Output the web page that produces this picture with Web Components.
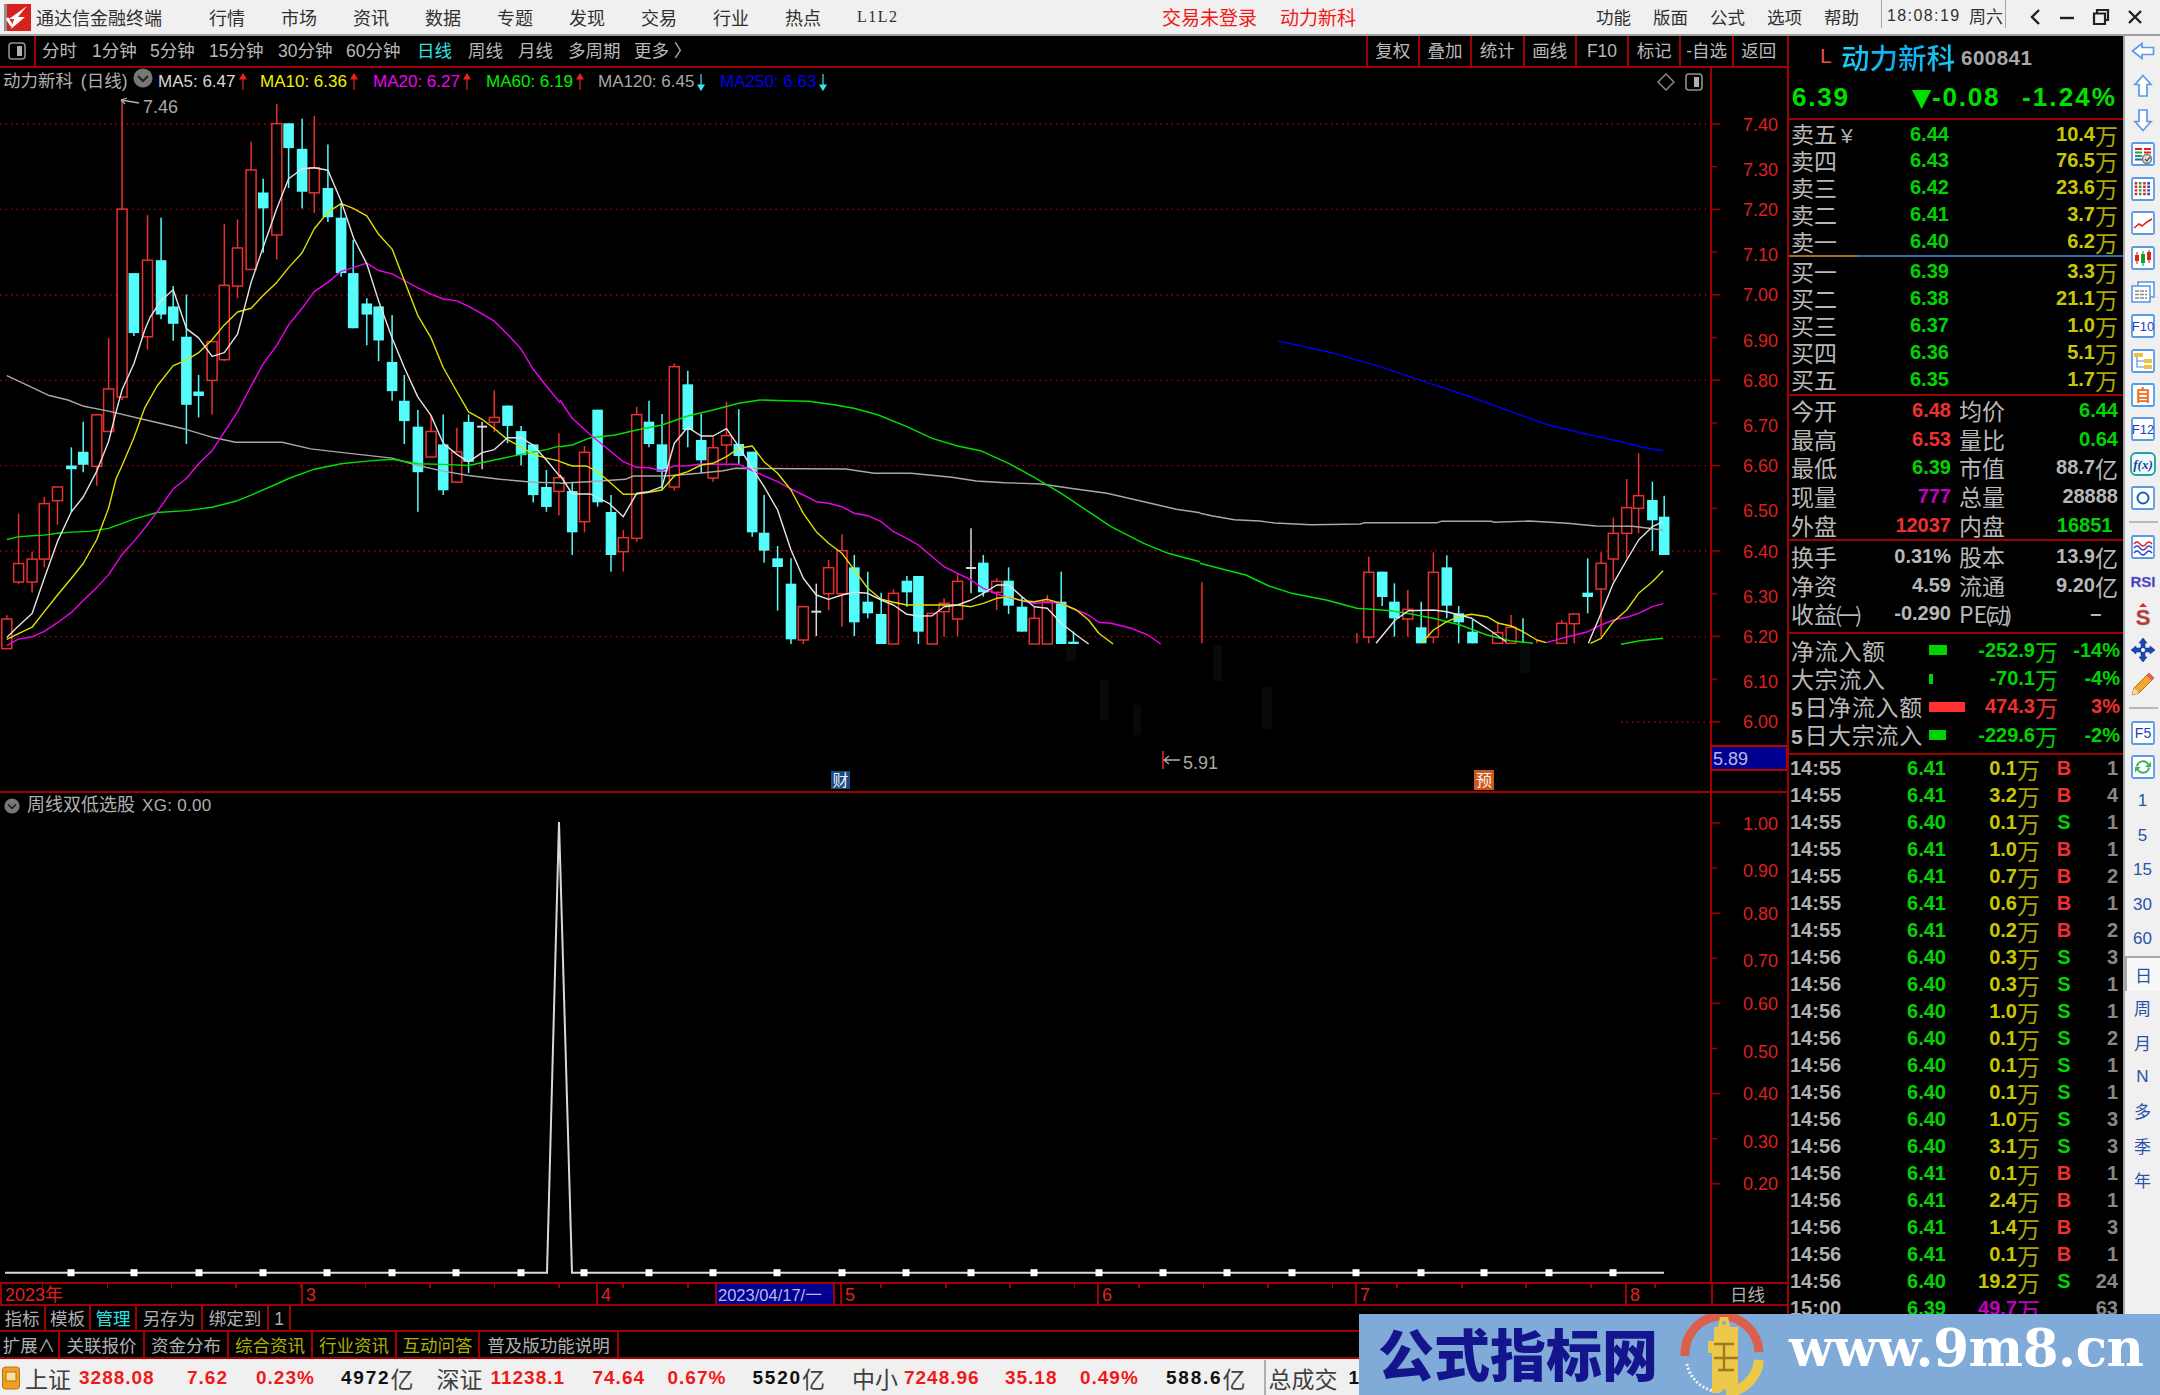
<!DOCTYPE html>
<html lang="zh-CN">
<head>
<meta charset="utf-8">
<title>通达信金融终端</title>
<style>
  html, body { margin: 0; padding: 0; background: #000; }
  body { width: 2160px; height: 1395px; overflow: hidden; position: relative;
    font-family: "Liberation Sans", "Noto Sans CJK SC", sans-serif; }
  #app { display: grid; grid-template-rows: 36px 1323px 36px; width: 2160px; height: 1395px; }
  #mid { display: grid; grid-template-columns: 1787px 336px 37px; height: 1323px; overflow: hidden; }
  #left { display: flex; flex-direction: column; height: 1323px; }
</style>
</head>
<body>
<div id="app">
  <tdx-titlebar></tdx-titlebar>
  <div id="mid">
    <div id="left">
      <tdx-toolbar></tdx-toolbar>
      <tdx-kline></tdx-kline>
      <tdx-xg></tdx-xg>
      <tdx-dates></tdx-dates>
      <tdx-tabs h="24" shift="1" items="指标:46,模板:45,管理:46:#30e0e0,另存为:66,绑定到:66,1:22"></tdx-tabs>
      <tdx-tabs h="25" shift="2" items="扩展∧:60,关联报价:85,资金分布:84,综合资讯:84:#b0b000,行业资讯:84:#b0b000,互动问答:83:#b0b000,普及版功能说明:139"></tdx-tabs>
    </div>
    <tdx-quote></tdx-quote>
    <tdx-side></tdx-side>
  </div>
  <tdx-status></tdx-status>
</div>
<tdx-banner>
  <span slot="name">公式指标网</span>
  <span slot="url">www.9m8.cn</span>
</tdx-banner>

<script>
const RED = "#a00000";
const CJK = '"Noto Sans CJK SC", sans-serif';
const NUM = '"Liberation Sans", "Noto Sans CJK SC", sans-serif';

// zoom crops -> page coords (that's how the points were read off)
const Z8 = { x: v => v / 2.8, y: v => 90 + v / 2.703 };
const Z9 = { x: v => 560 + v / 2.45, y: v => 340 + v / 3 };
const Z10 = { x: v => 1200 + v / 2.613, y: v => 320 + v / 3 };

// zx, wick top, body top, body bottom, wick bottom, type
const C8 = [[19,1420,1430,1510,1510,"r"],[52,1145,1280,1330,1335,"r"],[90,1248,1268,1330,1358,"r"],[124,1100,1118,1268,1290,"r"],[161,1073,1073,1110,1175,"r"],[200,966,1015,1025,1140,"c"],[233,897,978,1013,1033,"c"],[271,878,878,1017,1070,"r"],[304,670,808,923,923,"r"],[342,25,322,830,838,"r"],[375,495,495,657,665,"c"],[413,338,460,667,702,"r"],[451,345,460,607,620,"c"],[485,530,585,632,678,"c"],[522,553,667,851,957,"c"],[556,770,815,827,885,"c"],[594,678,680,785,877,"r"],[628,362,528,729,733,"r"],[665,350,427,530,563,"r"],[703,140,216,485,485,"r"],[737,240,277,320,440,"c"],[775,37,91,392,458,"r"],[808,90,90,157,265,"c"],[846,78,159,275,320,"c"],[880,70,210,278,332,"r"],[918,147,265,344,357,"c"],[955,305,345,495,505,"c"],[989,405,495,644,644,"c"],[1027,563,577,607,690,"c"],[1060,585,585,677,733,"c"],[1098,608,735,814,840,"c"],[1132,770,840,895,957,"c"],[1170,865,910,1033,1140,"c"],[1207,880,923,992,992,"r"],[1241,877,958,1082,1095,"c"],[1279,913,978,1060,1060,"r"],[1312,877,897,1005,1035,"c"],[1350,897,910,910,1025,"w"],[1384,812,885,898,925,"r"],[1421,853,853,908,955,"c"],[1459,908,922,987,1015,"c"],[1493,958,958,1095,1115,"c"],[1530,1027,1073,1127,1140,"c"],[1565,928,1048,1085,1150,"r"]];
const C9 = [[30,425,453,577,645,"c"],[60,318,337,545,577,"r"],[92,209,209,487,500,"c"],[125,465,516,645,695,"c"],[155,570,593,635,695,"r"],[188,200,224,595,605,"r"],[218,182,245,312,322,"c"],[250,222,313,395,450,"c"],[280,70,80,441,452,"r"],[313,92,133,270,322,"c"],[346,222,300,361,400,"c"],[375,290,323,414,425,"r"],[408,185,287,315,370,"r"],[438,208,312,348,375,"c"],[471,335,335,577,590,"c"],[500,465,578,632,668,"c"],[533,618,655,681,812,"c"],[566,655,731,898,912,"c"],[596,800,800,900,912,"r"],[628,731,815,815,888,"w"],[658,660,683,761,810,"r"],[691,583,632,761,860,"r"],[721,645,682,847,888,"c"],[754,695,785,820,835,"c"],[787,758,822,912,912,"c"],[817,748,760,912,912,"r"],[850,708,722,757,800,"c"],[878,708,708,875,912,"c"],[912,820,820,912,912,"r"],[941,775,790,815,890,"r"],[974,700,724,837,888,"r"],[1007,565,684,684,760,"w"],[1037,645,668,757,770,"c"],[1070,715,724,757,810,"r"],[1099,682,722,797,822,"c"],[1132,770,800,875,875,"c"],[1162,800,835,912,912,"r"],[1194,765,785,912,912,"r"],[1228,695,785,912,912,"c"],[1258,875,905,912,912,"c"]];
const C10 = [[5,787,970,970,970,"w-r"],[410,940,970,970,970,"w-r"],[441,710,757,951,970,"r"],[476,755,755,831,858,"c"],[508,790,845,895,950,"c"],[543,810,868,897,950,"r"],[578,845,922,970,970,"c"],[610,697,757,951,970,"r"],[645,706,742,857,895,"c"],[676,858,880,907,970,"c"],[712,900,935,970,970,"c"],[778,905,938,970,970,"r"],[813,885,922,970,970,"r"],[844,895,970,970,970,"w-c"],[880,960,970,970,970,"w-r"],[945,900,910,970,970,"r"],[978,880,882,911,970,"r"],[1013,715,818,831,880,"c"],[1048,697,730,807,950,"r"],[1080,593,640,717,782,"r"],[1115,477,563,640,715,"r"],[1146,400,527,565,640,"r"],[1182,485,540,601,693,"c"],[1213,527,590,705,705,"c"]];

const LINES = [
  ["#a8a8a8", Z8, [19,772,70,795,135,825,190,838,235,855,304,868,400,890,520,917,600,940,660,952,790,952,870,970,960,980,1098,995,1170,1015,1241,1030,1312,1042,1400,1052,1493,1060,1568,1062]],
  ["#a8a8a8", Z9, [0,430,70,425,160,418,180,408,260,408,340,400,400,392,430,385,700,387,770,400,860,400,960,412,1020,423,1090,428,1180,432,1250,445,1340,460,1420,482,1510,508,1568,518]],
  ["#a8a8a8", Z10, [0,580,30,587,90,599,155,603,195,609,290,614,420,612,430,608,620,608,630,604,760,604,770,607,860,603,960,610,1035,618,1130,619,1210,630]],
  ["#0000f0", Z10, [205,63,350,100,470,140,600,190,700,228,790,265,910,315,1000,340,1100,365,1150,380,1210,392]],
  ["#00e000", Z8, [19,1215,50,1208,90,1205,124,1203,161,1198,200,1195,250,1193,304,1185,375,1160,440,1142,522,1137,594,1128,665,1110,703,1095,775,1065,808,1050,880,1025,955,1010,1027,1003,1098,998,1170,1010,1241,1012,1312,1015,1384,1000,1459,985,1530,972,1568,962]],
  ["#00e000", Z9, [0,320,30,315,75,293,135,285,188,270,250,255,313,228,375,210,438,190,490,180,550,182,610,184,675,195,720,205,780,225,850,260,912,295,974,318,1030,332,1099,370,1162,412,1228,460,1295,515,1350,560,1430,610,1490,640,1568,665]],
  ["#00e000", Z10, [0,730,60,748,120,765,180,798,240,820,330,840,410,865,500,872,540,880,610,895,680,915,750,945,810,962,870,970]],
  ["#00e000", Z10, [1100,973,1150,962,1210,955]],
  ["#f000f0", Z8, [19,1502,50,1485,90,1478,124,1463,161,1440,200,1412,233,1380,271,1345,304,1310,342,1255,375,1220,405,1185,440,1140,485,1078,522,1050,556,1010,594,975,628,925,665,870,703,800,737,740,775,690,808,635,846,590,880,545,918,520,955,490,989,480,1027,468,1060,488,1098,497,1132,515,1170,535,1207,552,1241,565,1279,570,1312,585,1350,605,1384,625,1421,660,1459,700,1493,755,1530,800,1568,845]],
  ["#f000f0", Z9, [0,180,30,235,75,285,120,330,155,365,188,382,218,383,250,392,280,378,313,377,346,372,375,373,438,373,471,392,533,425,566,447,596,465,628,485,658,490,691,500,721,520,754,527,787,545,817,575,850,595,878,615,912,650,941,680,974,700,1007,720,1037,745,1070,762,1099,772,1132,783,1162,790,1194,787,1228,790,1265,810,1295,825,1320,847,1350,850,1400,865,1440,885,1472,912]],
  ["#f000f0", Z10, [905,968,945,955,980,945,1013,935,1048,915,1080,900,1115,892,1146,880,1182,860,1210,851]],
  ["#e0e000", Z8, [19,1485,50,1470,90,1452,124,1410,161,1365,200,1320,233,1280,271,1215,304,1130,325,1050,342,1015,375,940,405,860,440,800,485,745,522,730,556,710,594,675,628,635,665,600,703,590,737,555,775,520,808,480,846,440,880,375,918,330,955,307,989,320,1027,340,1060,390,1098,430,1132,515,1170,610,1207,670,1241,750,1279,815,1312,870,1350,890,1384,915,1421,945,1459,965,1493,985,1530,995,1568,1003]],
  ["#e0e000", Z9, [0,365,30,378,65,378,92,395,125,430,155,463,188,462,218,457,250,450,280,408,313,395,346,375,375,370,408,350,438,325,471,318,500,365,533,400,566,450,596,520,628,575,658,610,691,640,721,690,754,745,787,778,817,787,850,795,878,795,912,795,941,795,974,795,1007,800,1037,790,1070,775,1099,770,1132,782,1162,785,1194,778,1228,790,1265,810,1295,840,1320,880,1355,912]],
  ["#e0e000", Z10, [580,968,610,930,645,905,680,888,710,883,750,890,780,910,813,918,844,935,880,960,905,968]],
  ["#e0e000", Z10, [1020,970,1048,955,1080,905,1115,870,1146,820,1182,785,1210,752]],
  ["#e4e4e4", Z8, [19,1480,50,1450,90,1415,124,1320,161,1220,200,1140,233,1100,271,1030,304,950,325,870,342,810,375,740,405,650,420,615,450,570,485,540,522,645,556,670,594,720,628,710,665,660,703,520,737,425,775,320,808,240,846,213,880,210,918,217,955,300,990,400,1027,470,1060,570,1098,670,1132,750,1170,830,1207,880,1241,955,1279,985,1312,1005,1350,980,1384,972,1421,940,1459,940,1493,960,1530,1000,1568,1045]],
  ["#e4e4e4", Z9, [0,405,30,462,75,462,120,490,155,530,188,460,218,455,250,440,280,310,313,262,346,288,375,288,408,266,438,320,471,385,500,440,533,510,566,630,596,715,628,765,658,778,691,765,721,757,754,760,787,780,817,795,850,823,878,828,912,827,941,800,974,795,1007,780,1037,760,1070,735,1099,735,1132,770,1162,800,1194,805,1228,850,1265,885,1295,912]],
  ["#e4e4e4", Z10, [460,970,510,900,545,872,610,870,645,875,710,895,750,925,800,965]],
  ["#e4e4e4", Z10, [1015,970,1048,880,1080,790,1115,720,1146,660,1182,620,1210,605]]
];

function poly(color, z, pts) {
  let out = [];
  for (let i = 0; i < pts.length; i += 2) out.push(z.x(pts[i]).toFixed(1) + "," + z.y(pts[i + 1]).toFixed(1));
  return `<polyline points="${out.join(" ")}" fill="none" stroke="${color}" stroke-width="1.4" stroke-linejoin="round"/>`;
}

function candle(z, d) {
  const [zx, wt, bt, bb, wb, t] = d;
  const x = z.x(zx).toFixed(1), yw = z.y(wt), yt = z.y(bt), yb = z.y(bb), yl = z.y(wb);
  const rd = "#e83030", cy = "#54fcfc";
  if (t === "w-r") return `<line x1="${x}" x2="${x}" y1="${yw}" y2="${yl}" stroke="${rd}" stroke-width="1.5"/>`;
  if (t === "w-c") return `<line x1="${x}" x2="${x}" y1="${yw}" y2="${yl}" stroke="${cy}" stroke-width="1.5"/>`;
  if (t === "w") return `<line x1="${x}" x2="${x}" y1="${yw}" y2="${yl}" stroke="#d8d8d8" stroke-width="1.5"/><line x1="${x - 5}" x2="${+x + 5}" y1="${yt}" y2="${yt}" stroke="#d8d8d8" stroke-width="2"/>`;
  if (t === "r") return `<line x1="${x}" x2="${x}" y1="${yw}" y2="${yl}" stroke="${rd}" stroke-width="1.5"/><rect x="${x - 5}" y="${yt}" width="10" height="${yb - yt}" fill="#000" stroke="${rd}" stroke-width="1.5"/>`;
  return `<line x1="${x}" x2="${x}" y1="${yw}" y2="${yl}" stroke="${cy}" stroke-width="1.5"/><rect x="${x - 5.3}" y="${yt}" width="10.6" height="${yb - yt}" fill="${cy}"/>`;
}

function axisLabel(y, txt, major) {
  const lbl = major ? y : y + 2.5;
  return `<line x1="1711" x2="${major ? 1720 : 1717}" y1="${y}" y2="${y}" stroke="${RED}" stroke-width="1.5"/>
    <text x="1778" y="${lbl + 6.5}" text-anchor="end" fill="#dc2020" font-size="18">${txt}</text>`;
}

class TdxTitlebar extends HTMLElement {
  connectedCallback() {
    this.attachShadow({ mode: "open" });
    const menu = ["行情","市场","资讯","数据","专题","发现","交易","行业","热点"];
    this.shadowRoot.innerHTML = `<style>
      :host { display: flex; height: 36px; box-sizing: border-box; background: #f0f0f0; border-bottom: 2px solid #a0a0a0;
        color: #303030; font: 18px/34px ${CJK}; white-space: nowrap; }
      .l { flex: 0 0 1162px; display: flex; }
      .logo { flex: 0 0 36px; display: flex; align-items: center; padding-left: 4px; box-sizing: border-box; }
      .app { flex: 0 0 173px; }
      .m { flex: 0 0 72px; }
      .lv { font-family: "Liberation Serif", serif; font-size: 16px; letter-spacing: 1.5px; }
      .hot { flex: 0 0 434px; display: flex; color: #f01818; font-size: 19px; }
      .hot span:first-child { flex: 0 0 118px; }
      .r { flex: 0 0 282px; display: flex; }
      .r span { flex: 0 0 57px; font-size: 17.5px; }
      .clock { flex: 0 0 125px; display: flex; border-left: 1px solid #a8a8a8; border-right: 1px solid #a8a8a8; height: 28px; box-sizing: border-box; font: 16px/32px ${NUM}; }
      .clock b { font-weight: normal; flex: 0 0 87px; padding-left: 5px; letter-spacing: 1.4px; box-sizing: border-box; }
      .clock i { font-style: normal; font-family: ${CJK}; font-size: 17px; }
      .win { display: flex; align-items: center; padding-left: 22px; gap: 17px; }
    </style>
    <div class="l">
      <div class="logo"><svg width="27" height="27" viewBox="0 0 27 27"><rect width="27" height="27" fill="#d8201c"/><rect x="0" y="0" width="3" height="27" fill="#909090"/><path d="M23 2 L14 13 L21 13 L7 25 L10 15 L5 15 Z" fill="#fff"/><path d="M3 14 L8 22" stroke="#fff" stroke-width="3"/></svg></div>
      <div class="app">通达信金融终端</div>
      ${menu.map(m => `<div class="m">${m}</div>`).join("")}
      <div class="m lv">L1L2</div>
    </div>
    <div class="hot"><span>交易未登录</span><span>动力新科</span></div>
    <div class="r"><span>功能</span><span>版面</span><span>公式</span><span>选项</span><span>帮助</span></div>
    <div class="clock"><b>18:08:19</b><i>周六</i></div>
    <div class="win">
      <svg width="14" height="18" viewBox="0 0 14 18"><path d="M11 2 L4 9 L11 16" fill="none" stroke="#202020" stroke-width="2.4"/></svg>
      <svg width="16" height="18" viewBox="0 0 16 18"><path d="M1 10 H15" stroke="#202020" stroke-width="2.4"/></svg>
      <svg width="18" height="18" viewBox="0 0 18 18"><path d="M5 5 V2 H16 V12 H13 M2 5.5 H13 V16 H2 Z" fill="none" stroke="#202020" stroke-width="2.2"/></svg>
      <svg width="16" height="18" viewBox="0 0 16 18"><path d="M2 3 L14 15 M14 3 L2 15" stroke="#202020" stroke-width="2.4"/></svg>
    </div>`;
  }
}

class TdxToolbar extends HTMLElement {
  connectedCallback() {
    this.attachShadow({ mode: "open" });
    const left = [["分时",50],["1分钟",58],["5分钟",59],["15分钟",69],["30分钟",68],["60分钟",71],["日线",51,"#30e0e0"],["周线",50],["月线",50],["多周期",66],["更多 〉",90]];
    const right = ["复权","叠加","统计","画线","F10","标记","-自选","返回"];
    this.shadowRoot.innerHTML = `<style>
      :host { display: flex; height: 32px; box-sizing: border-box; background: #000; border-bottom: 2px solid ${RED};
        color: #b8b8b8; font: 17.5px/30px ${NUM}; white-space: nowrap; }
      .ico { flex: 0 0 36px; box-sizing: border-box; border-right: 2px solid ${RED}; display: flex; align-items: center; justify-content: center; }
      .gap { flex: 0 0 6px; }
      .sp { flex: 1; }
      .c { flex: 0 0 52.3px; box-sizing: border-box; border-left: 2px solid ${RED}; text-align: center; }
      .end { flex: 0 0 3px; }
    </style>
    <div class="ico"><svg width="18" height="18" viewBox="0 0 18 18"><rect x="1" y="1" width="16" height="16" rx="3" fill="none" stroke="#909090" stroke-width="1.6"/><rect x="9" y="4" width="5" height="10" fill="#b0b0b0"/></svg></div>
    <div class="gap"></div>
    ${left.map(l => `<div style="flex:0 0 ${l[1]}px;${l[2] ? "color:" + l[2] : ""}">${l[0]}</div>`).join("")}
    <div class="sp"></div>
    ${right.map(r => `<div class="c">${r}</div>`).join("")}
    <div class="end"></div>`;
  }
}

class TdxKline extends HTMLElement {
  connectedCallback() {
    this.attachShadow({ mode: "open" });
    const arrUp = `<svg width="8" height="18" viewBox="0 0 8 18"><path d="M4 17 V2 M1 6 L4 1 L7 6 Z" stroke="#f02020" fill="#f02020" stroke-width="1.2"/></svg>`;
    const arrDn = `<svg width="8" height="18" viewBox="0 0 8 18"><path d="M4 1 V16 M1 12 L4 17 L7 12 Z" stroke="#30e8f0" fill="#30e8f0" stroke-width="1.2"/></svg>`;
    const ma = [["MA5: 6.47","#d8d8d8",102,arrUp],["MA10: 6.36","#f0f000",113,arrUp],["MA20: 6.27","#f000f0",113,arrUp],["MA60: 6.19","#00f000",112,arrUp],["MA120: 6.45","#a8a8a8",122,arrDn],["MA250: 6.63","#0000f0",120,arrDn]];
    let g = "";
    [124, 209.4, 295, 380.3, 465.7, 551, 636.7].forEach(y => {
      g += `<line x1="0" x2="1711" y1="${y}" y2="${y}" stroke="#b00000" stroke-width="1.3" stroke-dasharray="1.5 4"/>`;
    });
    g += `<line x1="1621" x2="1711" y1="722" y2="722" stroke="#b00000" stroke-width="1.3" stroke-dasharray="1.5 4"/>`;
    // barely visible leftovers under the wiped band
    [[1066,647,10,14],[1100,680,9,40],[1133,705,8,30],[1213,645,9,36],[1262,687,10,42],[1520,645,10,28]].forEach(r => {
      g += `<rect x="${r[0]}" y="${r[1]}" width="${r[2]}" height="${r[3]}" fill="#060b09"/>`;
    });
    C8.forEach(d => g += candle(Z8, d));
    C9.forEach(d => g += candle(Z9, d));
    C10.forEach(d => g += candle(Z10, d));
    LINES.forEach(l => g += poly(l[0], l[1], l[2]));
    // high / low marks
    g += `<path d="M121 100 L139 103 M121 100 L127 98 M121 100 L125 104" stroke="#b0b0b0" stroke-width="1.3" fill="none"/>
      <text x="143" y="113" fill="#a8a8a8" font-size="18">7.46</text>
      <line x1="1163" x2="1163" y1="751" y2="769" stroke="#e83030" stroke-width="1.5"/>
      <path d="M1164 760 H1180 M1164 760 L1169 756 M1164 760 L1169 764" stroke="#b0b0b0" stroke-width="1.3" fill="none"/>
      <text x="1183" y="769" fill="#a8a8a8" font-size="18">5.91</text>
      <rect x="831" y="771" width="19" height="18" fill="#1a4a80"/>
      <text x="840.5" y="786" text-anchor="middle" fill="#e8f0ff" font-size="16" style="font-family:${CJK}">财</text>
      <rect x="1474" y="770" width="20" height="20" fill="#c85a20"/>
      <text x="1484" y="786" text-anchor="middle" fill="#fff0e0" font-size="16" style="font-family:${CJK}">预</text>`;
    // price axis
    g += `<line x1="1711" x2="1711" y1="95" y2="791" stroke="${RED}" stroke-width="2"/>`;
    ["7.40","7.30","7.20","7.10","7.00","6.90","6.80","6.70","6.60","6.50","6.40","6.30","6.20","6.10","6.00"].forEach((t, i) => {
      g += axisLabel(124 + i * 42.7, t, i % 2 === 0);
    });
    g += `<rect x="1711" y="746" width="76" height="24" fill="#000090" stroke="#c00000" stroke-width="2"/>
      <text x="1713" y="765" fill="#b8b8e8" font-size="18">5.89</text>`;
    this.shadowRoot.innerHTML = `<style>
      :host { display: block; height: 725px; box-sizing: border-box; background: #000; border-bottom: 2px solid ${RED}; }
      .leg { height: 27px; width: 1712px; box-sizing: border-box; border-right: 2px solid ${RED}; display: flex; align-items: center;
        padding-left: 3px; font: 17px/27px ${NUM}; white-space: nowrap; }
      .name { flex: 0 0 130px; color: #b0b0b0; font-size: 17.5px; word-spacing: 3px; }
      .dot { flex: 0 0 25px; }
      .ma { display: flex; align-items: center; gap: 3px; }
      .tr { margin-left: auto; padding-right: 7px; display: flex; gap: 10px; align-items: center; }
      svg.ch { display: block; font-family: ${NUM}; }
    </style>
    <div class="leg">
      <div class="name">动力新科 (日线)</div>
      <div class="dot"><svg width="20" height="20" viewBox="0 0 20 20"><circle cx="10" cy="10" r="9.5" fill="#777"/><path d="M5 8 L10 13 L15 8" fill="none" stroke="#222" stroke-width="2"/></svg></div>
      ${ma.map(m => `<div class="ma" style="flex:0 0 ${m[2]}px;color:${m[1]}"><span>${m[0]}</span>${m[3]}</div>`).join("")}
      <div class="tr">
        <svg width="18" height="18" viewBox="0 0 18 18"><path d="M9 1 L17 9 L9 17 L1 9 Z" fill="none" stroke="#909090" stroke-width="1.4"/></svg>
        <svg width="18" height="18" viewBox="0 0 18 18"><rect x="1" y="1" width="16" height="16" rx="3" fill="none" stroke="#909090" stroke-width="1.6"/><rect x="9" y="4" width="5" height="10" fill="#b0b0b0"/></svg>
      </div>
    </div>
    <svg class="ch" width="1787" height="696" viewBox="0 95 1787 696">${g}</svg>`;
  }
}

class TdxXg extends HTMLElement {
  connectedCallback() {
    this.attachShadow({ mode: "open" });
    const sq = [71,134,199,263,327,392,456,521,584,649,713,777,842,906,971,1034,1099,1163,1227,1292,1356,1421,1484,1549,1613];
    const base = 1272.7;
    let g = `<polyline points="5,${base} 547,${base} 559,822 572,${base} 1664,${base}" fill="none" stroke="#d8d8d8" stroke-width="2"/>`;
    sq.forEach(x => g += `<rect x="${x - 3.5}" y="${base - 3.5}" width="7" height="7" fill="#fff"/>`);
    g += `<line x1="1711" x2="1711" y1="815" y2="1282" stroke="${RED}" stroke-width="2"/>`;
    ["1.00","0.90","0.80","0.70","0.60","0.50","0.40","0.30","0.20"].forEach((t, i) => {
      g += axisLabel(823 + i * 45.1, t, i % 2 === 0);
    });
    this.shadowRoot.innerHTML = `<style>
      :host { display: block; height: 491px; box-sizing: border-box; background: #000; border-bottom: 2px solid ${RED}; }
      .leg { height: 22px; width: 1712px; box-sizing: border-box; border-right: 2px solid ${RED}; display: flex; align-items: center; padding: 3px 0 0 4px;
        color: #b0b0b0; font: 17px/19px ${NUM}; letter-spacing: .3px; white-space: nowrap; }
      .leg svg { margin-right: 7px; }
      .leg span { margin-right: 7px; font-size: 18px; letter-spacing: 0; }
      svg.ch { display: block; font-family: ${NUM}; }
    </style>
    <div class="leg"><svg width="16" height="16" viewBox="0 0 20 20"><circle cx="10" cy="10" r="9.5" fill="#777"/><path d="M5 8 L10 13 L15 8" fill="none" stroke="#222" stroke-width="2"/></svg><span>周线双低选股</span>XG: 0.00</div>
    <svg class="ch" width="1787" height="467" viewBox="0 815 1787 467">${g}</svg>`;
  }
}

class TdxDates extends HTMLElement {
  connectedCallback() {
    this.attachShadow({ mode: "open" });
    const cells = [["2023年",301],["3",295],["4",119],["2023/04/17/一",118,"d"],["",7],["5",257],["6",258],["7",270],["8",86],["日线",76,"e"]];
    this.shadowRoot.innerHTML = `<style>
      :host { display: flex; height: 22px; box-sizing: border-box; border-bottom: 2px solid ${RED}; color: #e02020;
        background: #000 repeating-linear-gradient(90deg, transparent 0 42px, ${RED} 42px 43.5px, transparent 43.5px 64.5px) 0 0 / 1711px 4px no-repeat;
        font: 18px/22px ${NUM}; white-space: nowrap; }
      div { box-sizing: border-box; border-left: 2px solid ${RED}; padding-left: 3px; height: 20px; }
      div:first-child { border-left: 0; padding-left: 7px; }
      .d { background: #000090; color: #b8b8e8; font-size: 16.5px; padding-left: 1px; border-left: 2px solid ${RED}; }
      .e { color: #b0b0b0; font-size: 17.5px; padding-left: 17px; }
    </style>${cells.map(c => `<div class="${c[2] || ""}" style="flex:0 0 ${c[1]}px">${c[0]}</div>`).join("")}`;
  }
}

class TdxTabs extends HTMLElement {
  connectedCallback() {
    this.attachShadow({ mode: "open" });
    const items = this.getAttribute("items").split(",").map(s => s.split(":"));
    const h = +this.getAttribute("h");
    const shift = +this.getAttribute("shift") || 0;
    this.shadowRoot.innerHTML = `<style>
      :host { display: flex; height: ${h + 2}px; box-sizing: border-box; background: #000; border-bottom: 2px solid ${RED}; color: #b0b0b0;
        font: 17.5px/${h}px ${NUM}; white-space: nowrap; }
      div { box-sizing: border-box; border-right: 2px solid ${RED}; text-align: center; height: ${h}px; padding-top: ${shift}px; }
      .sp { flex: 1; border-right: 0; }
    </style>${items.map(i => `<div style="flex:0 0 ${i[1]}px;${i[2] ? "color:" + i[2] : ""}">${i[0]}</div>`).join("")}<div class="sp"></div>`;
  }
}

class TdxQuote extends HTMLElement {
  connectedCallback() {
    this.attachShadow({ mode: "open" });
    const G = "#00d400", R = "#f03030", Y = "#c8c800", W = "#b8b8b8", M = "#c000c0";
    const wan = (v, c) => `<span class="n" style="color:${c || Y}">${v}</span><span class="u" style="color:${(c && c !== Y) ? c : "#b0a800"}">万</span>`;
    const yi = v => `<span class="n" style="color:${W}">${v}</span><span class="u" style="color:${W}">亿</span>`;
    const sell = [["卖五","6.44","10.4"],["卖四","6.43","76.5"],["卖三","6.42","23.6"],["卖二","6.41","3.7"],["卖一","6.40","6.2"]];
    const buy = [["买一","6.39","3.3"],["买二","6.38","21.1"],["买三","6.37","1.0"],["买四","6.36","5.1"],["买五","6.35","1.7"]];
    const oRow = r => `<div class="o"><div class="lb">${r[0]}${r[0] === "卖五" ? `<i>¥</i>` : ""}</div><div class="n" style="color:${G}">${r[1]}</div><div class="ri">${wan(r[2])}</div></div>`;
    const num = (v, c) => `<span class="n" style="color:${c}">${v}</span>`;
    const stat = [["今开",num("6.48",R),"均价",num("6.44",G)],["最高",num("6.53",R),"量比",num("0.64",G)],["最低",num("6.39",G),"市值",yi("88.7")],["现量",num("777",M),"总量",num("28888",W)],["外盘",num("12037",R),"内盘",num("16851&nbsp;",G)]];
    const stat2 = [["换手",num("0.31%",W),"股本",yi("13.9")],["净资",num("4.59",W),"流通",yi("9.20")],["收益<s>(一)</s>",num("-0.290",W),"PE<s>(动)</s>",num("–&nbsp;&nbsp;&nbsp;",W)]];
    const sRow = r => `<div class="s"><div class="lb">${r[0]}</div><div class="ri">${r[1]}</div><div class="lb l2">${r[2]}</div><div class="ri">${r[3]}</div></div>`;
    const flow = [["净流入额",18,G,"-252.9",G,"-14%"],["大宗流入",4,G,"-70.1",G,"-4%"],["<b>5</b>日净流入额",36,"#ff3030","474.3",R,"3%"],["<b>5</b>日大宗流入",17,G,"-229.6",G,"-2%"]];
    const ticks = ["14:55 6.41 0.1 B 1","14:55 6.41 3.2 B 4","14:55 6.40 0.1 S 1","14:55 6.41 1.0 B 1","14:55 6.41 0.7 B 2","14:55 6.41 0.6 B 1","14:55 6.41 0.2 B 2","14:56 6.40 0.3 S 3","14:56 6.40 0.3 S 1","14:56 6.40 1.0 S 1","14:56 6.40 0.1 S 2","14:56 6.40 0.1 S 1","14:56 6.40 0.1 S 1","14:56 6.40 1.0 S 3","14:56 6.40 3.1 S 3","14:56 6.41 0.1 B 1","14:56 6.41 2.4 B 1","14:56 6.41 1.4 B 3","14:56 6.41 0.1 B 1","14:56 6.40 19.2 S 24","15:00 6.39 49.7 - 63"].map(s => s.split(" "));
    this.shadowRoot.innerHTML = `<style>
      :host { display: block; height: 1323px; overflow: hidden; box-sizing: border-box; background: #000; border-left: 2px solid ${RED}; white-space: nowrap;
        font-family: ${NUM}; }
      .head { box-sizing: border-box; border-bottom: 2px solid ${RED}; height: 84px; }
      .nm { display: flex; align-items: center; height: 40px; padding-left: 31px; }
      .nm .L { color: #e85050; font: 21px ${NUM}; flex: 0 0 21px; }
      .nm .ttl { font: 500 28.5px/37px ${CJK}; flex: 0 0 120px; color: #18c8ec;
        background: linear-gradient(90deg,#18d8f8,#10a8f0 45%,#18d0f0); -webkit-background-clip: text; background-clip: text; -webkit-text-fill-color: transparent; }
      .nm .c { color: #a8a8a8; font: bold 20.5px ${NUM}; letter-spacing: .5px; position: relative; top: 2px; }
      .px { display: flex; height: 42px; align-items: center; color: #00e000; font: bold 26px/42px ${NUM}; letter-spacing: 2.1px; }
      .px span:nth-child(1) { flex: 0 0 123px; padding-left: 3px; box-sizing: border-box; letter-spacing: 1.8px; }
      .px span:nth-child(2) { flex: 0 0 20px; font: 25px "DejaVu Sans", sans-serif; letter-spacing: 0; }
      .px span:nth-child(3) { flex: 0 0 90px; letter-spacing: 1.8px; }
      .o { display: grid; grid-template-columns: 121px 60px 1fr; height: 27px; align-items: center; width: 329px; }
      .lb { font: 23px/27px ${CJK}; color: #b8b8b8; padding-left: 2px; }
      .lb i { font: normal 21px ${NUM}; margin-left: 4px; color: #b0b0b0; }
      .lb b { font: bold 21px ${NUM}; margin-right: 1px; }
      .lb s { text-decoration: none; letter-spacing: -4px; margin-left: -2px; font-size: 21px; }
      .n { font: bold 20px/27px ${NUM}; }
      .u { font: 23px/27px ${CJK}; position: relative; top: 1px; }
      .ri { display: flex; justify-content: flex-end; align-items: center; height: 27px; }
      .dv { height: 3px; display: flex; }
      .dv::before { content: ""; width: 69px; height: 2px; background: #a07028; }
      .dv::after { content: ""; flex: 1; height: 2px; background: #2f6ea8; }
      .line { height: 2px; background: ${RED}; }
      .s { display: grid; grid-template-columns: 72px 90px 78px 89px; height: 28.7px; align-items: center; width: 329px; }
      .s .l2 { padding-left: 8px; }
      .sec2 .s { height: 28.5px; }
      .f { display: grid; grid-template-columns: 140px 40px 89px 62px; height: 28.4px; align-items: center; width: 331px; }
      .f .lb { letter-spacing: .7px; }
      .tick { display: grid; grid-template-columns: 72px 85px 94px 48px 30px; height: 27px; align-items: center; width: 329px; }
      .tm { color: #b0b0b0; padding-left: 1px; }
      .bs { text-align: center; font: bold 20px/27px ${NUM}; }
    </style>
    <div class="head">
      <div class="nm"><span class="L">L</span><span class="ttl">动力新科</span><span class="c">600841</span></div>
      <div class="px"><span>6.39</span><span>▼</span><span>-0.08</span><span>-1.24%</span></div>
    </div>
    <div>${sell.map(oRow).join("")}</div>
    <div class="dv"></div>
    <div>${buy.map(oRow).join("")}</div>
    <div class="line" style="margin-top:1px"></div>
    <div>${stat.map(sRow).join("")}</div>
    <div class="line"></div>
    <div class="sec2" style="padding-top:1px">${stat2.map(sRow).join("")}</div>
    <div class="line" style="margin-top:4px"></div>
    <div style="padding-top:2px">${flow.map(f => `<div class="f"><div class="lb">${f[0]}</div><div><div style="width:${f[1]}px;height:10px;background:${f[2]}"></div></div><div class="ri">${wan(f[3], f[4])}</div><div class="ri"><span class="n" style="color:${f[4]}">${f[5]}</span></div></div>`).join("")}</div>
    <div class="line" style="margin-top:3px"></div>
    <div>${ticks.map(t => {
      const isB = t[3] === "B";
      const volc = t[3] === "-" ? M : Y;
      return `<div class="tick"><div class="n tm">${t[0]}</div><div class="ri"><span class="n" style="color:${G}">${t[1]}</span></div><div class="ri">${wan(t[2], volc)}</div><div class="bs" style="color:${isB ? R : G}">${t[3] === "-" ? "" : t[3]}</div><div class="ri"><span class="n" style="color:#888">${t[4]}</span></div></div>`;
    }).join("")}</div>`;
  }
}

class SideBtn extends HTMLElement {
  connectedCallback() {
    this.attachShadow({ mode: "open" });
    this.shadowRoot.innerHTML = `<style>
      :host { display: flex; height: 34.4px; align-items: center; justify-content: center; color: #2a52a8; font: 17px ${CJK}; box-sizing: border-box; }
      :host([on]) { background: #f8f8f8; border-top: 2px solid #a8a8a8; border-left: 2px solid #a8a8a8; }
    </style><slot></slot>`;
  }
}

class TdxSide extends HTMLElement {
  connectedCallback() {
    this.attachShadow({ mode: "open" });
    const box = (inner, c) => `<svg width="24" height="24" viewBox="0 0 24 24"><rect x="1" y="1" width="22" height="22" rx="1.5" fill="#fff" stroke="${c || "#5a9ae6"}" stroke-width="1.8"/>${inner}</svg>`;
    const big = p => `<svg width="24" height="24" viewBox="0 0 24 24"><path d="${p}" fill="#fff" stroke="#5a9ae6" stroke-width="1.7"/></svg>`;
    const rows = (x, w, cs) => cs.map((c, i) => `<rect x="${x}" y="${6 + i * 3.5}" width="${w}" height="2" fill="${c}"/>`).join("");
    const a = [
      big("M1.5 12 L11 4.5 V8.5 H22.5 V15.5 H11 V19.5 Z"),
      big("M12 1.5 L20 10.5 H16 V22 H8 V10.5 H4 Z"),
      big("M12 22.5 L20 13.5 H16 V2 H8 V13.5 H4 Z"),
      box(rows(4, 7, ["#e02020","#20a040","#20a040","#2060d0"]) + rows(13, 7, ["#e02020","#e02020","#909090"]) + `<circle cx="16" cy="17" r="4.5" fill="#ddd" stroke="#777" stroke-width="1.5"/><path d="M14 17 L16 19 L19 15" fill="none" stroke="#555" stroke-width="1.3"/>`),
      box(["#e02020","#20a040","#e02020","#2040d0"].map((c, i) => `<path d="M${5 + i * 4.2} 5 V19" stroke="${c}" stroke-width="2.6" stroke-dasharray="2.4 1.2"/>`).join("")),
      box(`<path d="M3 17 L8 13 L11 15 L16 11 L21 8" fill="none" stroke="#e02020" stroke-width="1.6"/>`),
      box(`<path d="M6 6 V18" stroke="#c01010"/><rect x="4" y="9" width="4" height="6" fill="#e02020"/><path d="M12 5 V20" stroke="#108030"/><rect x="10" y="8" width="4" height="9" fill="#10a030"/><path d="M18 4 V17" stroke="#c01010"/><rect x="16" y="6" width="4" height="8" fill="#e02020"/>`),
      `<svg width="24" height="24" viewBox="0 0 24 24"><rect x="7" y="2" width="16" height="15" fill="#fff" stroke="#5a9ae6" stroke-width="1.6"/><rect x="1" y="6" width="18" height="16" fill="#fff" stroke="#5a9ae6" stroke-width="1.6"/><path d="M4 11 H16 M4 14.5 H16 M4 18 H16" stroke="#888" stroke-width="1.5" stroke-dasharray="4 1"/></svg>`,
      box(`<text x="12" y="17" text-anchor="middle" font-family="Liberation Sans" font-size="13" fill="#1840c0">F10</text>`),
      box(`<rect x="3" y="4" width="9" height="4" fill="#f0c040"/><rect x="13" y="10" width="8" height="4" fill="#f0c040"/><rect x="13" y="16" width="8" height="4" fill="#f0c040"/><path d="M6 8 V18 H13 M6 12 H13" fill="none" stroke="#5090d0" stroke-width="1.2"/>`),
      box(`<text x="12" y="18" text-anchor="middle" font-family="Noto Sans CJK SC" font-weight="700" font-size="16" fill="#f07020">自</text>`, "#4aa0f0"),
      box(`<text x="12" y="17" text-anchor="middle" font-family="Liberation Sans" font-size="13" fill="#1840c0">F12</text>`),
      `<svg width="28" height="24" viewBox="0 0 28 24"><rect x="2" y="1" width="24" height="22" rx="5" fill="#eefafa" stroke="#20a0a0" stroke-width="1.8"/><text x="14" y="17" text-anchor="middle" font-family="Liberation Serif" font-style="italic" font-weight="700" font-size="13" fill="#1840a0">f(x)</text></svg>`,
      box(`<circle cx="12" cy="12" r="5.5" fill="none" stroke="#1860c0" stroke-width="2"/>`),
      "-",
      box(`<path d="M3 9 Q6 5 9 9 T15 9 T21 9" fill="none" stroke="#e02020" stroke-width="1.3"/><path d="M3 13 Q6 9 9 13 T15 13 T21 13" fill="none" stroke="#3040d0" stroke-width="1.3"/><path d="M3 18 Q6 14 9 18 T15 18 T21 18" fill="none" stroke="#3040d0" stroke-width="1.3"/>`),
      `<svg width="28" height="24" viewBox="0 0 28 24"><text x="14" y="18" text-anchor="middle" font-family="Liberation Sans" font-weight="700" font-size="15" fill="#3838b8" stroke="#9090d8" stroke-width=".4">RSI</text></svg>`,
      `<svg width="24" height="26" viewBox="0 0 24 26"><path d="M12 1 L16 5 H8 Z" fill="#c83030"/><text x="12" y="23" text-anchor="middle" font-family="Liberation Sans" font-weight="700" font-size="22" fill="#c83030" stroke="#888" stroke-width=".5">S</text></svg>`,
      `<svg width="26" height="26" viewBox="0 0 26 26"><path d="M13 1 L17 6 H15 V11 H20 V9 L25 13 L20 17 V15 H15 V20 H17 L13 25 L9 20 H11 V15 H6 V17 L1 13 L6 9 V11 H11 V6 H9 Z" fill="#1848b8" stroke="#0c2c80" stroke-width=".6"/><circle cx="13" cy="13" r="2" fill="#fff"/></svg>`,
      `<svg width="26" height="26" viewBox="0 0 26 26"><path d="M19 2 L24 7 L9 22 L2 24 L4 17 Z" fill="#f0a830" stroke="#b87018" stroke-width="1"/><path d="M19 2 L24 7 L21.5 9.5 L16.5 4.5 Z" fill="#e06060"/><path d="M4 17 L9 22 L2 24 Z" fill="#f0d8b0"/></svg>`,
      "-",
      box(`<text x="12" y="17" text-anchor="middle" font-family="Liberation Sans" font-size="14" fill="#1840c0">F5</text>`),
      box(`<path d="M5 11 A7 7 0 0 1 18 9 L20 6 V12 H14 L16.5 10 A5 5 0 0 0 7 12 Z" fill="#40b060"/><path d="M19 13 A7 7 0 0 1 6 15 L4 18 V12 H10 L7.5 14 A5 5 0 0 0 17 12 Z" fill="#40b060"/>`)
    ];
    const labels = ["1","5","15","30","60","日","周","月","N","多","季","年"];
    this.shadowRoot.innerHTML = `<style>
      :host { display: block; height: 1323px; box-sizing: border-box; background: #f0f0f0; border-left: 2px solid #a8a8a8; overflow: hidden; }
      .wrap { margin-top: -2px; }
      .sep { height: 14px; display: flex; align-items: center; padding: 0 2px 0 4px; }
      .sep i { display: block; flex: 1; height: 2px; background: #b8b8b8; }
      side-btn.d { font-family: ${NUM}; }
      svg { display: block; }
    </style>
    <div class="wrap">
      ${a.map(h => h === "-" ? `<div class="sep"><i></i></div>` : `<side-btn>${h}</side-btn>`).join("")}
      ${labels.map(l => `<side-btn class="${/\d|N/.test(l) ? "d" : ""}" ${l === "日" ? "on" : ""}>${l}</side-btn>`).join("")}
    </div>`;
  }
}

class TdxStatus extends HTMLElement {
  connectedCallback() {
    this.attachShadow({ mode: "open" });
    const R = "#f01818", K = "#101010";
    const c = [[25,"上证","c"],[79,"3288.08",R],[187,"7.62",R],[256,"0.23%",R],[341,"4972",K],[390,"亿","c"],[436,"深证","c"],[490,"11238.1",R],[592,"74.64",R],[667,"0.67%",R],[752,"5520",K],[801,"亿","c"],[851,"中小","c"],[903,"7248.96",R],[1004,"35.18",R],[1079,"0.49%",R],[1165,"588.6",K],[1220,"亿","c"],[1266,"总成交","c"],[1350,"1",K]];
    const cells = c.map((it, i) => {
      const nx = i + 1 < c.length ? c[i + 1][0] : 1362;
      const w = nx - it[0];
      if (it[2] === "c") {
        const sep = it[1] === "总成交" ? "border-left:2px solid #b0b0b0;padding-left:2px;margin-left:-4px;" : "";
        return `<span class="c" style="flex:0 0 ${w}px;${sep}">${it[1]}</span>`;
      }
      return `<span class="n" style="flex:0 0 ${w}px;color:${it[2]};${it[2] === K ? "letter-spacing:1.8px" : ""}">${it[1]}</span>`;
    });
    this.shadowRoot.innerHTML = `<style>
      :host { display: flex; align-items: center; height: 36px; background: #f0f0f0; overflow: hidden; white-space: nowrap; border-top: 1px solid #e8e8e8; box-sizing: border-box; }
      .ic { flex: 0 0 25px; padding-left: 2px; box-sizing: border-box; display: flex; }
      .n { font: bold 19px/36px ${NUM}; letter-spacing: 1px; }
      .c { font: 23px/36px ${CJK}; color: #404040; box-sizing: border-box; }
    </style>
    <div class="ic"><svg width="20" height="26" viewBox="0 0 20 26"><rect x=".5" y="2" width="17" height="22" rx="3" fill="#f0a020" stroke="#b87010"/><rect x="4" y="7" width="10" height="9" fill="#f8e0a0" stroke="#b87010"/></svg></div>
    ${cells.join("")}`;
  }
}

class TdxBanner extends HTMLElement {
  connectedCallback() {
    this.attachShadow({ mode: "open" });
    this.shadowRoot.innerHTML = `<style>
      :host { position: absolute; left: 1359px; top: 1314px; width: 801px; height: 81px; background: #80abd9; display: flex; align-items: center;
        padding-left: 19px; box-sizing: border-box; white-space: nowrap; }
      .n { flex: 0 0 302px; font: 900 56px/81px "Noto Sans CJK SC", sans-serif; color: #14148c; position: relative; top: -3px; }
      .logo { flex: 0 0 109px; height: 81px; display: block; }
      .u { font: 700 51.5px/81px "DejaVu Serif", serif; color: #fff; position: relative; top: -6px; letter-spacing: -.4px; }
      svg { display: block; }
    </style>
    <div class="n"><slot name="name"></slot></div>
    <div class="logo"><svg width="90" height="81" viewBox="0 0 90 81">
      <path d="M5 42 A37 38 0 0 1 79 38" fill="none" stroke="#d9604c" stroke-width="9"/>
      <path d="M79 46 A37 36 0 0 1 46 79" fill="none" stroke="#ecc94a" stroke-width="10"/>
      <path d="M7 50 A37 34 0 0 0 33 77" fill="none" stroke="#f4f4f4" stroke-width="3" stroke-dasharray="2 2"/>
      <g transform="translate(4 0)">
        <path d="M36 3 h8 l2 10 h8 v62 h-14 l-4 4 h-8 v-40 h-4 v-12 h6 v-14 h4 z" fill="#ecc94a"/>
        <circle cx="40" cy="9" r="2" fill="#80abd9"/>
        <path d="M30 30 H50 M30 44 H54 M34 56 H50 M40 30 V56" stroke="#a07820" stroke-width="2.4" fill="none"/>
      </g>
    </svg></div>
    <div class="u"><slot name="url"></slot></div>`;
  }
}

customElements.define("tdx-titlebar", TdxTitlebar);
customElements.define("tdx-toolbar", TdxToolbar);
customElements.define("tdx-kline", TdxKline);
customElements.define("tdx-xg", TdxXg);
customElements.define("tdx-dates", TdxDates);
customElements.define("tdx-tabs", TdxTabs);
customElements.define("tdx-quote", TdxQuote);
customElements.define("side-btn", SideBtn);
customElements.define("tdx-side", TdxSide);
customElements.define("tdx-status", TdxStatus);
customElements.define("tdx-banner", TdxBanner);
</script>
</body>
</html>
